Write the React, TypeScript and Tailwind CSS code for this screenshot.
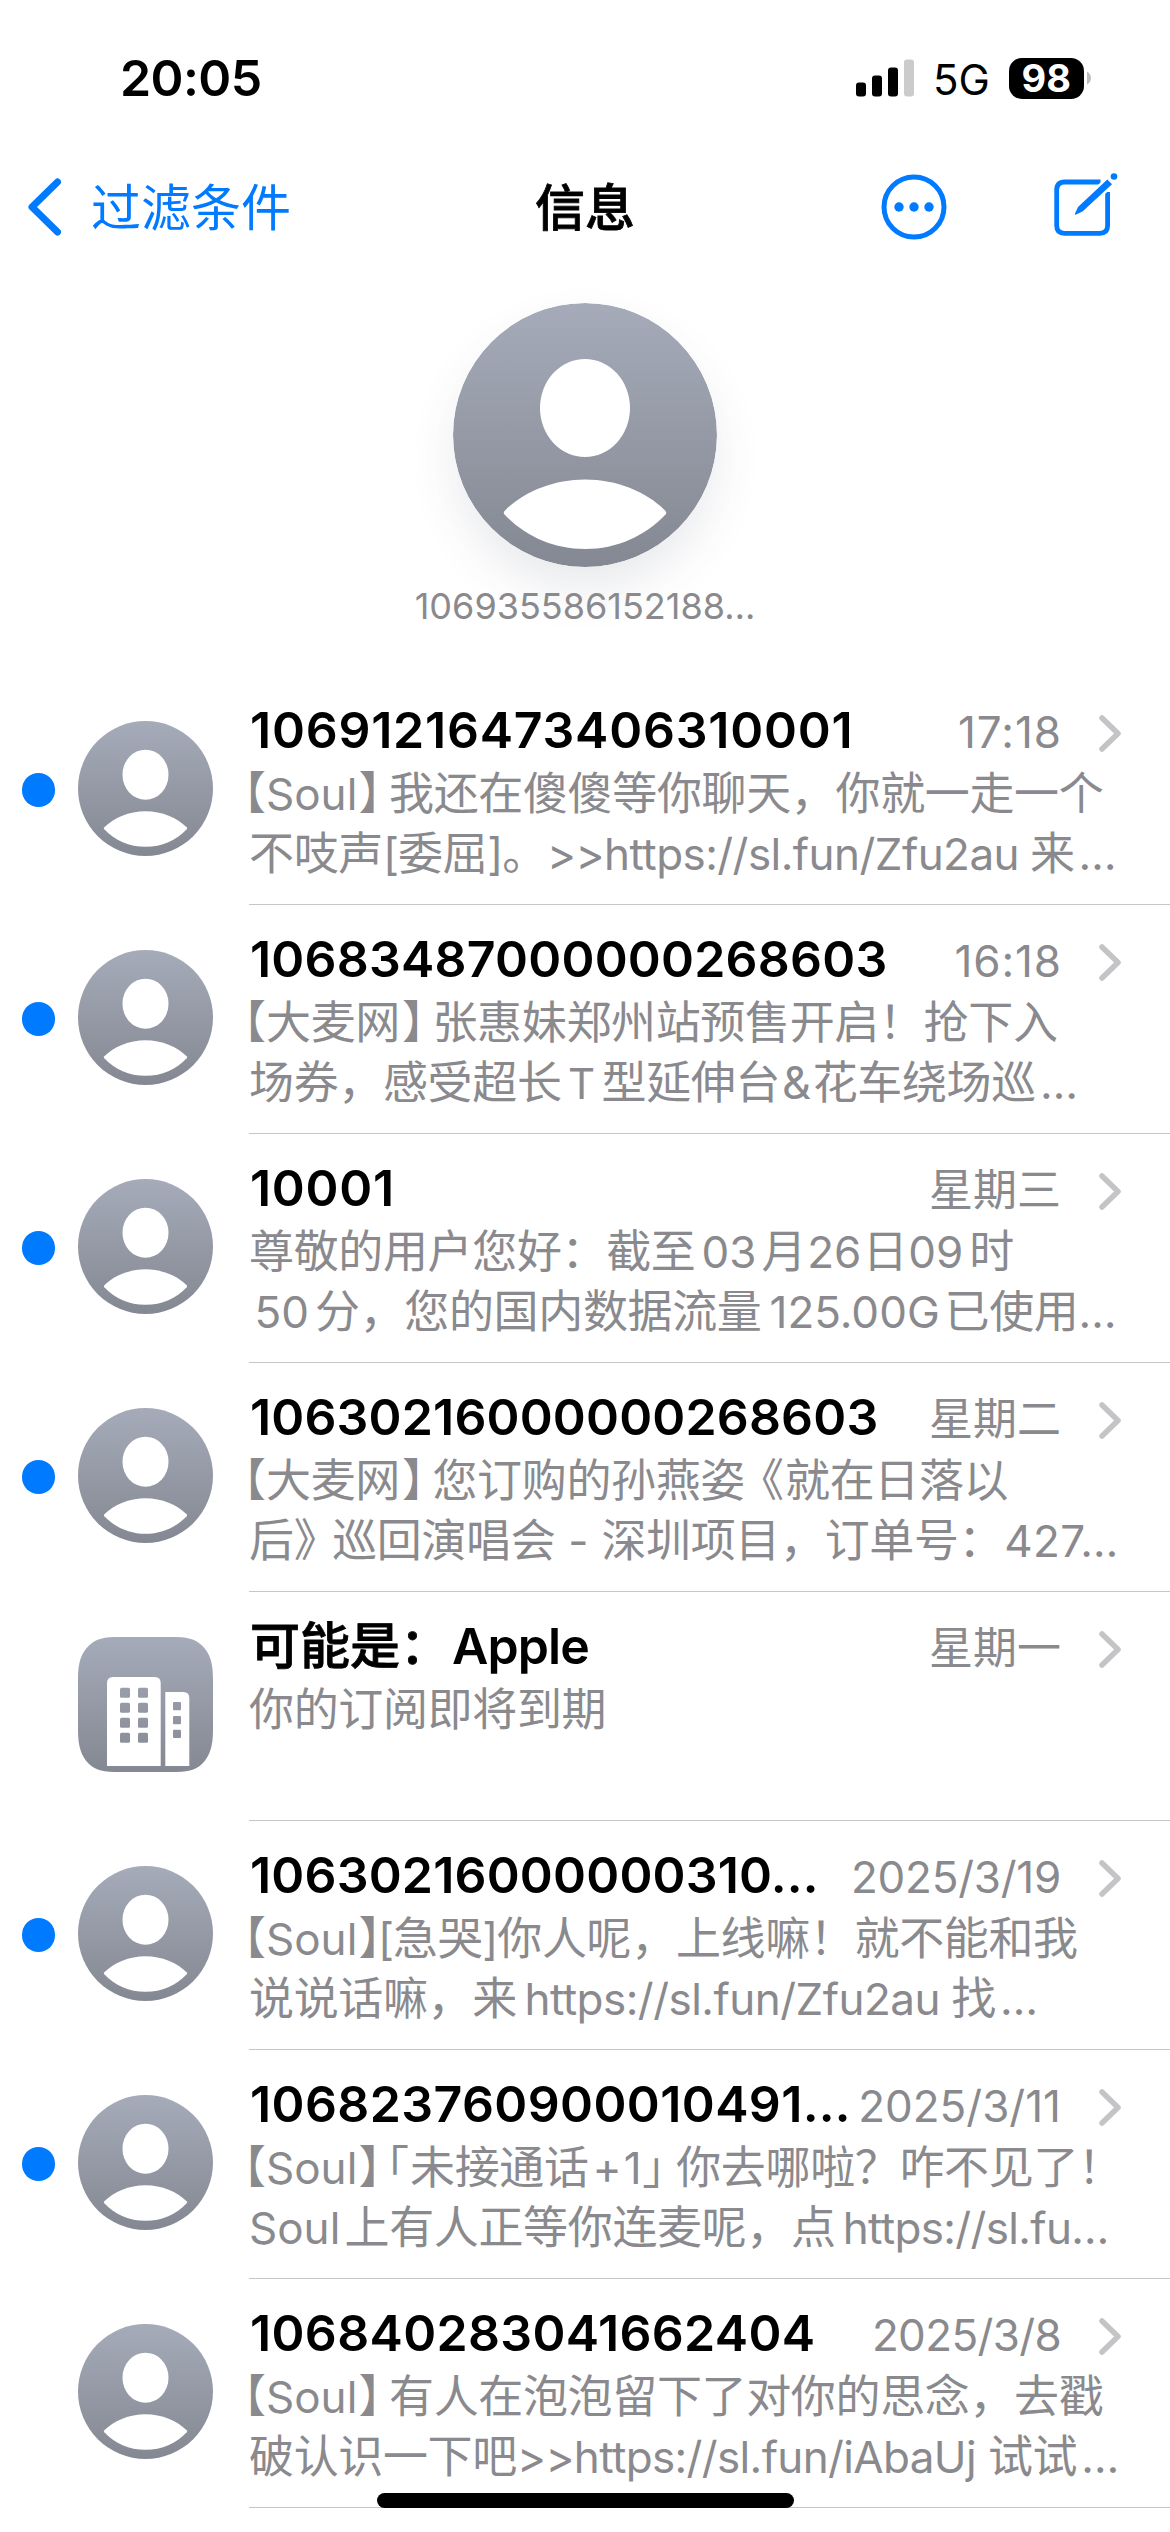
import { useId } from "react";

// A preview line is a list of runs; a run with classes gets its own advance box.
type Run = string | [text: string, className: string];

type Conversation = {
  title: string;
  titleClass: string;
  date: string;
  dateClass: string;
  unread?: boolean;
  business?: boolean;
  lines: Run[][];
};

const open: Run = ["【", "w-[17px] indent-[-5.5px] [font-feature-settings:'halt']"];
const close: Run = ["】", "w-[32.5px] indent-[2px] [font-feature-settings:'halt']"];
const dots: Run = ["…", "text-[44px] pl-[4px] tracking-[0.5px]"];
const tightDots: Run = ["…", "text-[44px]"];
const soul: Run = ["Soul", "w-[91.5px] text-[44px]"];
const soulClose: Run = ["】", "w-[31.5px] indent-[1px] [font-feature-settings:'halt']"];
const soulCloseTight: Run = [
  "】",
  "w-[20.5px] indent-[1px] tracking-[-3px] [font-feature-settings:'halt']",
];
const bracketL: Run = ["[", "w-[15px] text-center text-[44px]"];
const bracketR: Run = ["]", "w-[15px] text-center text-[44px]"];

const conversations: Conversation[] = [
  {
    title: "10691216473406310001",
    titleClass: "tracking-[0.77px]",
    date: "17:18",
    dateClass: "tracking-[1px] -mr-[1px]",
    unread: true,
    lines: [
      [open, soul, soulClose, "我还在傻傻等你聊天，你就一走一个"],
      [
        "不吱声",
        bracketL,
        "委屈",
        bracketR,
        "。",
        [">>https://sl.fun/Zfu2au", "w-[483px] text-[44px] tracking-[-0.55px]"],
        "来",
        dots,
      ],
    ],
  },
  {
    title: "10683487000000268603",
    titleClass: "tracking-[0.22px]",
    date: "16:18",
    dateClass: "tracking-[0.9px] -mr-[1px]",
    unread: true,
    lines: [
      [open, "大麦网", close, "张惠妹郑州站预售开启！抢下入"],
      [
        "场券，感受超长",
        ["T", "w-[40px] text-center text-[42px]"],
        "型延伸台",
        ["&", "w-[32.5px] text-center text-[45px]"],
        "花车绕场巡",
        dots,
      ],
    ],
  },
  {
    title: "10001",
    titleClass: "tracking-[0.7px]",
    date: "星期三",
    dateClass: "",
    unread: true,
    lines: [
      [
        "尊敬的用户您好：截至",
        ["03", "w-[66px] pl-[6px] text-[44px]"],
        "月",
        ["26", "w-[56.5px] pl-[1px] text-[44px]"],
        "日",
        ["09", "w-[62px] pl-[1px] text-[44px]"],
        "时",
      ],
      [
        ["50", "w-[66px] pl-[5.5px] text-[44px]"],
        "分，您的国内数据流量",
        ["125.00G", "w-[183px] pl-[8px] text-[44px] tracking-normal"],
        "已使用",
        tightDots,
      ],
    ],
  },
  {
    title: "10630216000000268603",
    titleClass: "tracking-[0.17px]",
    date: "星期二",
    dateClass: "",
    unread: true,
    lines: [
      [
        open,
        "大麦网",
        close,
        "您订购的孙燕姿",
        ["《", "w-[40px] indent-[16.5px] [font-feature-settings:'halt']"],
        "就在日落以",
      ],
      [
        "后",
        ["》", "w-[38.5px] [font-feature-settings:'halt']"],
        "巡回演唱会",
        ["-", "w-[46px] text-center text-[44px]"],
        "深圳项目，订单号：",
        ["427…", "pl-[1px] text-[44px] tracking-[0.4px]"],
      ],
    ],
  },
  {
    title: "可能是：Apple",
    titleClass: "",
    date: "星期一",
    dateClass: "",
    business: true,
    lines: [["你的订阅即将到期"]],
  },
  {
    title: "10630216000000310…",
    titleClass: "tracking-[0.19px]",
    date: "2025/3/19",
    dateClass: "tracking-[-0.25px]",
    unread: true,
    lines: [
      [open, soul, soulCloseTight, bracketL, "急哭", bracketR, "你人呢，上线嘛！就不能和我"],
      [
        "说说话嘛，来",
        ["https://sl.fun/Zfu2au", "w-[434.4px] pl-[7.5px] text-[44px] tracking-[-0.52px]"],
        "找",
        dots,
      ],
    ],
  },
  {
    title: "106823760900010491…",
    titleClass: "tracking-[0.4px]",
    date: "2025/3/11",
    dateClass: "",
    unread: true,
    lines: [
      [
        open,
        soul,
        soulCloseTight,
        ["「", "w-[32px] indent-[8.5px] [font-feature-settings:'halt']"],
        "未接通话",
        ["+1", "w-[53.6px] pl-[4px] text-[44px] tracking-[2px]"],
        ["」", "w-[34px] [font-feature-settings:'halt']"],
        "你去哪啦？咋不见了！",
      ],
      [
        ["Soul", "w-[95.5px] text-[44px]"],
        "上有人正等你连麦呢，点",
        ["https://sl.fu…", "pl-[7px] text-[44px] tracking-[-0.65px]"],
      ],
    ],
  },
  {
    title: "106840283041662404",
    titleClass: "tracking-[0.35px]",
    date: "2025/3/8",
    dateClass: "tracking-[-0.65px]",
    lines: [
      [open, soul, soulClose, "有人在泡泡留下了对你的思念，去戳"],
      [
        "破认识一下吧",
        [">>https://sl.fun/iAbaUj", "w-[471px] text-[44px] tracking-[-0.64px]"],
        "试试",
        dots,
      ],
    ],
  },
];

function PersonAvatar({ className }: { className: string }) {
  const id = useId();
  return (
    <svg viewBox="0 0 264 264" className={className}>
      <defs>
        <linearGradient id={id} x1="0" y1="0" x2="0" y2="1">
          <stop offset="0" stopColor="#a5abb9" />
          <stop offset="1" stopColor="#848892" />
        </linearGradient>
      </defs>
      <circle cx="132" cy="132" r="132" fill={`url(#${id})`} />
      <ellipse cx="132" cy="105" rx="45" ry="49" fill="#fff" />
      <path
        d="M51.5 208C70 189 100 176.500 132 176.500S194 189 212.500 208Q214 209.800 212.500 211.500C192 233 164 246 132 246S72 233 51.500 211.500Q50 209.800 51.500 208Z"
        fill="#fff"
      />
    </svg>
  );
}

function BusinessAvatar({ className }: { className: string }) {
  const id = useId();
  return (
    <svg viewBox="0 0 135 135" className={className}>
      <defs>
        <linearGradient id={id} x1="0" y1="0" x2="0" y2="135" gradientUnits="userSpaceOnUse">
          <stop offset="0" stopColor="#a5abb9" />
          <stop offset="1" stopColor="#848892" />
        </linearGradient>
      </defs>
      <path
        d="M42 0H93C109 0 117 1.500 124 8.500C132 16 135 26 135 42V93C135 109 132 119 124 127C117 133.500 109 135 93 135H42C26 135 18 133.500 11 127C3 119 0 109 0 93V42C0 26 3 16 11 8.500C18 1.500 26 0 42 0Z"
        fill={`url(#${id})`}
      />
      <path d="M29 129V46Q29 40 35 40H76.700Q82.700 40 82.700 46V129Z" fill="#fff" />
      <path d="M87.300 129V55H105.300Q111.300 55 111.300 61V129Z" fill="#fff" />
      {[50.7, 65.7, 80.7, 95.7].map((y) => (
        <g key={y} fill={`url(#${id})`}>
          <rect x="42" y={y} width="10" height="10" rx="1.5" />
          <rect x="60" y={y} width="10" height="10" rx="1.5" />
        </g>
      ))}
      {[65, 79, 92.7].map((y) => (
        <rect key={y} x="95" y={y} width="8" height="8.300" rx="1" fill={`url(#${id})`} />
      ))}
    </svg>
  );
}

function StatusBar() {
  return (
    <div className="flex h-[156px] items-center justify-between pr-[79px] pl-[120px] text-black">
      <span className="text-[50px] font-semibold tracking-[-0.6px]">20:05</span>
      <div className="flex items-center">
        <svg width="58" height="38" viewBox="0 0 58 38">
          <rect x="0" y="23.500" width="10" height="14" rx="3" />
          <rect x="16" y="16.500" width="10" height="21" rx="3" />
          <rect x="32" y="8.500" width="10" height="29" rx="3" />
          <rect x="48" y="0.500" width="10" height="37" rx="3" fill="#cbcbcb" />
        </svg>
        <span className="w-[95px] pt-[3px] pl-[19px] text-[42px] leading-[60px]">5G</span>
        <div className="flex h-[41px] w-[74.5px] items-center justify-center rounded-[13px] bg-black text-[38px] leading-none font-bold text-white">
          98
        </div>
        <svg width="4" height="14" viewBox="0 0 4 14" className="ml-[3.5px]">
          <path d="M0 0.500C5.300 3 5.300 11 0 13.500Z" fill="#bdbdbd" />
        </svg>
      </div>
    </div>
  );
}

function NavBar() {
  return (
    <div className="grid h-[102px] grid-cols-[1fr_auto_1fr] items-center">
      <div className="flex items-center pl-[25px] text-[#007aff]">
        <svg width="40" height="64" viewBox="0 0 40 64" fill="none" stroke="currentColor">
          <path d="M32.500 7L7 32L32.500 57" strokeWidth="7" strokeLinecap="round" strokeLinejoin="round" />
        </svg>
        <span className="pt-[2px] ml-[26px] text-[50px] leading-[60px]">过滤条件</span>
      </div>
      <h1 className="pt-[2px] text-[50px] leading-[60px] font-medium text-black [-webkit-text-stroke:0.8px_black]">
        信息
      </h1>
      <div className="flex items-center justify-end gap-[106px] pr-[51px] text-[#007aff]">
        <svg width="66" height="66" viewBox="0 0 66 66" fill="none" stroke="currentColor" strokeWidth="5">
          <circle cx="33" cy="33" r="30" />
          <g fill="currentColor" stroke="none">
            <circle cx="18" cy="33" r="4.700" />
            <circle cx="33" cy="33" r="4.700" />
            <circle cx="48" cy="33" r="4.700" />
          </g>
        </svg>
        <svg width="66" height="68" viewBox="0 0 66 68" fill="none" stroke="currentColor">
          <path
            d="M47.500 9H11.500Q3.700 9 3.700 17V52.500Q3.700 60.300 11.500 60.300H46.800Q54.600 60.300 54.600 52.500V19"
            strokeWidth="4.800"
          />
          <path d="M54.700 6.500L59 11L29 38L22 41L25.500 34Z" fill="#fff" stroke="#fff" strokeWidth="5.500" />
          <path
            d="M54.300 6.500L59 11.200L29.500 38.500L23 41.600Q21.500 42 22 40.400L25 34Z"
            fill="currentColor"
            stroke="none"
          />
          <circle cx="61" cy="3.500" r="3.300" fill="currentColor" stroke="none" />
        </svg>
      </div>
    </div>
  );
}

function PreviewLine({ runs }: { runs: Run[] }) {
  return (
    <p className="flex h-[60px] items-baseline whitespace-nowrap [text-spacing-trim:space-all]">
      {runs.map((run, i) =>
        typeof run === "string" ? (
          <span key={i} className="shrink-0 tracking-[-0.35px]">
            {run}
          </span>
        ) : (
          <span key={i} className={`shrink-0 ${run[1]}`}>
            {run[0]}
          </span>
        ),
      )}
    </p>
  );
}

function ConversationRow({ item }: { item: Conversation }) {
  return (
    <li className="flex h-[229px]">
      <div className="flex w-[249px] shrink-0 pt-[45px] pl-[21.5px]">
        <div className="flex h-[138px] w-[56.5px] items-center">
          {item.unread && <span className="size-[33.5px] rounded-full bg-[#007aff]" />}
        </div>
        {item.business ? (
          <BusinessAvatar className="size-[135px]" />
        ) : (
          <PersonAvatar className="size-[135px]" />
        )}
      </div>
      <div className="min-w-0 flex-1 border-b border-[#c6c6c8] pt-[24px]">
        <div className="flex h-[64px] items-baseline pl-[1px] whitespace-nowrap">
          <h2 className={`flex-1 text-[50px] leading-[60px] font-semibold text-black ${item.titleClass}`}>
            {item.business ? (
              <>
                <span className="font-medium [-webkit-text-stroke:0.8px_black] [text-spacing-trim:space-all]">
                  可能是：
                </span>
                <span className="ml-[2px] tracking-[-0.9px]">Apple</span>
              </>
            ) : (
              item.title
            )}
          </h2>
          <span className={`text-[44px] leading-[60px] text-[#8a8a8e] ${item.dateClass}`}>{item.date}</span>
          <svg
            width="24"
            height="38"
            viewBox="0 0 24 38"
            fill="none"
            stroke="#c4c4c7"
            className="mr-[48.5px] ml-[36.5px] translate-y-[4px]"
          >
            <path d="M4 4L20 19.500L4 35" strokeWidth="5.500" strokeLinecap="round" strokeLinejoin="round" />
          </svg>
        </div>
        <div className="text-[45px] leading-[60px] text-[#8a8a8e]">
          {item.lines.map((runs, i) => (
            <PreviewLine key={i} runs={runs} />
          ))}
        </div>
      </div>
    </li>
  );
}

export default function App() {
  return (
    <div
      lang="zh-CN"
      className="relative h-[2532px] w-[1170px] overflow-hidden bg-white font-['Inter','Noto_Sans_CJK_SC',sans-serif]"
    >
      <StatusBar />
      <NavBar />
      <div className="flex flex-col items-center pt-[45px]">
        <PersonAvatar className="size-[264px] rounded-full shadow-[0_24px_50px_-4px_rgba(60,65,90,0.12)]" />
        <p className="mt-[14px] text-[36px] leading-[50px] text-[#8a8a8e]">106935586152188…</p>
      </div>
      <ul className="mt-[45px]">
        {conversations.map((item) => (
          <ConversationRow key={item.title} item={item} />
        ))}
      </ul>
      <div className="absolute bottom-[24px] left-[377px] h-[15px] w-[417px] rounded-full bg-black" />
    </div>
  );
}
